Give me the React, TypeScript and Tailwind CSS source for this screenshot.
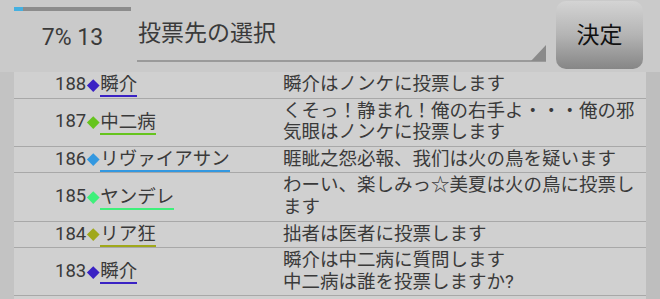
import React from "react";

type Row = { num: number; name: string; dot: string; line: string; msg: string[] };

const rows: Row[] = [
  { num: 188, name: "瞬介", dot: "bg-[#3a22c4]", line: "border-[#3a22c4]", msg: ["瞬介はノンケに投票します"] },
  { num: 187, name: "中二病", dot: "bg-[#66c41e]", line: "border-[#66c41e]", msg: ["くそっ！静まれ！俺の右手よ・・・俺の邪気眼はノンケに投票します"] },
  { num: 186, name: "リヴァイアサン", dot: "bg-[#3398e0]", line: "border-[#3398e0]", msg: ["睚眦之怨必報、我们は火の鳥を疑います"] },
  { num: 185, name: "ヤンデレ", dot: "bg-[#3ef07a]", line: "border-[#3ef07a]", msg: ["わーい、楽しみっ☆美夏は火の鳥に投票します"] },
  { num: 184, name: "リア狂", dot: "bg-[#a0a81a]", line: "border-[#a0a81a]", msg: ["拙者は医者に投票します"] },
  { num: 183, name: "瞬介", dot: "bg-[#3a22c4]", line: "border-[#3a22c4]", msg: ["瞬介は中二病に質問します", "中二病は誰を投票しますか?"] },
];

export default function App() {
  return (
    <div className="w-[660px] h-[299px] overflow-hidden bg-[#cacaca] text-[#3a3a3a] font-[Roboto,'Noto_Sans_CJK_JP',sans-serif] flex flex-col">
      {/* header */}
      <div className="h-[72px] flex shrink-0">
        <div className="ml-[14px] w-[117px] flex flex-col pt-[7px]">
          <div className="h-[4px] w-full bg-[#8c8c8c] flex">
            <div className="w-[9px] h-full bg-[#45b0e0]" />
          </div>
          <div className="mt-[15px] text-center text-[23px] leading-[23px]">7% 13</div>
        </div>
        <div className="ml-[6px] w-[409px] h-[62px] border-b-2 border-[#9a9a9a] flex flex-col">
          <div className="pt-[22px] pl-[1px] text-[23px] leading-[23px]">投票先の選択</div>
          <div className="flex-1 flex justify-end items-end">
            <svg width="15" height="16" viewBox="0 0 15 16" className="block">
              <polygon points="15,0 15,16 0,16" fill="#8a8a8a" />
            </svg>
          </div>
        </div>
        <div className="ml-[10px] mt-[1px] w-[87px] h-[68px] rounded-[10px] bg-linear-to-b from-[#d4d4d4] via-[#b4b4b4] to-[#868686] flex items-center justify-center text-[23px] text-[#111] pt-[2px]">
          決定
        </div>
      </div>
      {/* body */}
      <div className="flex flex-1">
        <div className="w-[14px] bg-[#c3c3c3]" />
        <div className="w-[632px] bg-[#d0d0d0] flex flex-col">
          {rows.map((r, i) => (
            <div key={i} className="flex border-b border-[#a8a8a8] py-[2px] text-[18.5px] leading-[21.6px]">
              <div className="w-[269px] pl-[41px] flex items-center">
                <span>{r.num}</span>
                <span className="w-[14px] flex justify-center">
                  <span className={`block w-[8.5px] h-[8.5px] rotate-45 ${r.dot}`} />
                </span>
                <span className={`border-b-2 ${r.line} leading-[22px] mt-[-0.6px] mb-[-1.8px]`}>{r.name}</span>
              </div>
              <div className="flex-1 flex flex-col">
                {r.msg.map((m, j) => (
                  <div key={j}>{m}</div>
                ))}
              </div>
            </div>
          ))}
        </div>
        <div className="w-[14px] bg-[#bebebe]" />
      </div>
    </div>
  );
}
